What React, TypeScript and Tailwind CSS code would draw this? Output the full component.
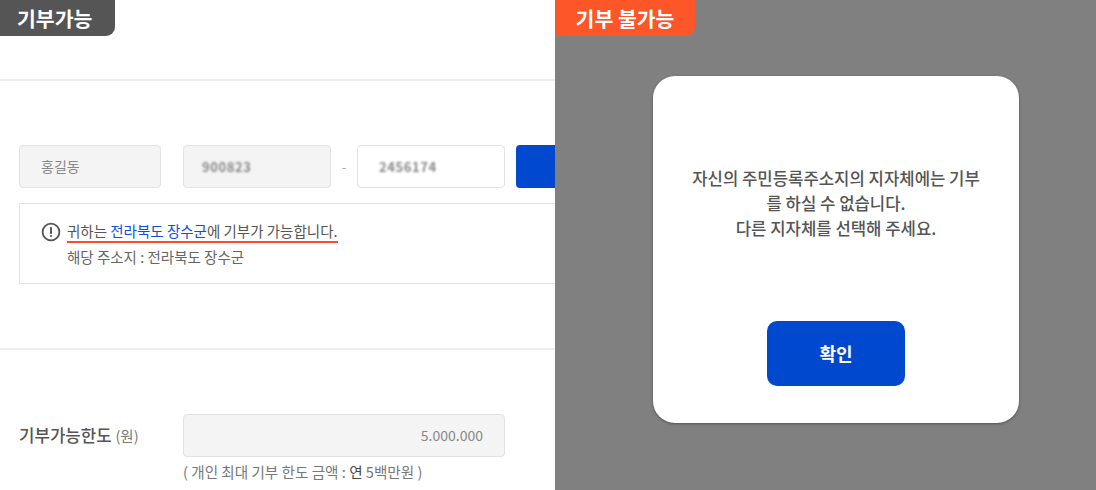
const font = "font-['Noto_Sans_CJK_KR','Noto_Sans',sans-serif]";

function Field({ className, children }: { className: string; children: React.ReactNode }) {
  return (
    <div className={`h-[43px] shrink-0 rounded-[4px] border border-[#e2e2e2] flex items-center text-[14px] text-[#888] ${className}`}>
      {children}
    </div>
  );
}

export default function App() {
  return (
    <div className={`flex w-[1096px] h-[490px] overflow-hidden bg-white ${font}`}>
      {/* Left: donation possible */}
      <section className="w-[555px] shrink-0 overflow-hidden">
        <div className="w-[115px] h-9 bg-[#555555] rounded-br-[9px] flex items-center pl-[17px] text-[20.5px] font-bold text-white leading-none whitespace-nowrap">
          기부가능
        </div>
        <div className="mt-[43px] h-[2px] bg-[#eeeeee]" />

        {/* ID row */}
        <div className="mt-[64px] flex items-center pl-[19px]">
          <Field className="w-[142px] bg-[#f4f4f4] pl-[21px]">홍길동</Field>
          <Field className="w-[148px] ml-[22px] bg-[#f4f4f4] pl-[18px]">
            <span className="blur-[0.8px] font-bold tracking-[0.6px] text-[13px]">900823</span>
          </Field>
          <span className="w-[26px] shrink-0 text-center text-[13px] text-[#aaa]">-</span>
          <Field className="w-[148px] bg-white pl-[21px]">
            <span className="blur-[0.8px] font-bold tracking-[0.6px] text-[13px]">2456174</span>
          </Field>
          <div className="w-[80px] h-[43px] ml-[11px] shrink-0 rounded-[4px] bg-[#0049cf]" />
        </div>

        {/* Notice */}
        <div className="mt-[15px] ml-[19px] w-[560px] h-[81px] border border-[#e4e4e4] pl-[21px] pt-[17px]">
          <div className="flex items-center h-[22px]">
            <svg width="20" height="20" viewBox="0 0 20 20" fill="none" className="shrink-0">
              <circle cx="10" cy="10" r="8.4" stroke="#555" strokeWidth="1.8" />
              <path d="M10 5.6v5.6" stroke="#555" strokeWidth="1.9" strokeLinecap="round" />
              <circle cx="10" cy="14" r="1.1" fill="#555" />
            </svg>
            <span className="ml-[6px] w-[271px] h-[22px] border-b-[2.5px] border-[#fc4e25] text-[14.5px] leading-[20px] text-[#555] whitespace-nowrap">
              귀하는 <span className="text-[#0a52d6]">전라북도 장수군</span>에 기부가 가능합니다.
            </span>
          </div>
          <p className="ml-[26px] mt-[4px] text-[14.5px] leading-[20px] text-[#666]">해당 주소지 : 전라북도 장수군</p>
        </div>

        <div className="mt-[64px] h-[2px] bg-[#eeeeee]" />

        {/* Limit row */}
        <div className="mt-[64px] flex items-center pl-[19px]">
          <div className="w-[164px] shrink-0 text-[16.8px] font-medium text-[#555] whitespace-nowrap">
            기부가능한도 <span className="text-[14.5px] font-normal text-[#777]">(원)</span>
          </div>
          <Field className="w-[322px] bg-[#f4f4f4] justify-end pr-[21px] text-[#666]">5.000.000</Field>
        </div>
        <p className="ml-[183px] mt-[5px] text-[14.6px] leading-[20px] text-[#777] whitespace-nowrap">
          ( 개인 최대 기부 한도 금액 : <span className="text-[#444]">연</span> 5백만원 )
        </p>
      </section>

      {/* Right: donation not possible */}
      <section className="flex-1 bg-[#808080]">
        <div className="w-[140px] h-9 bg-[#fc5629] rounded-br-[9px] flex items-center justify-center text-[20.5px] font-bold text-white leading-none whitespace-nowrap">
          기부 불가능
        </div>
        <div className="mt-[40px] ml-[98px] w-[366px] h-[347px] rounded-[22px] bg-white shadow-[0_1px_3px_rgba(0,0,0,0.35)] flex flex-col items-center">
          <p className="mt-[90px] w-[320px] text-center text-[16.7px] font-medium leading-[25px] text-[#555]">
            자신의 주민등록주소지의 지자체에는 기부
            <br />를 하실 수 없습니다.
            <br />다른 지자체를 선택해 주세요.
          </p>
          <button
            type="button"
            className="mt-[80px] w-[138px] h-[65px] rounded-[10px] bg-[#0049cf] text-[18px] font-bold text-white"
          >
            확인
          </button>
        </div>
      </section>
    </div>
  );
}
